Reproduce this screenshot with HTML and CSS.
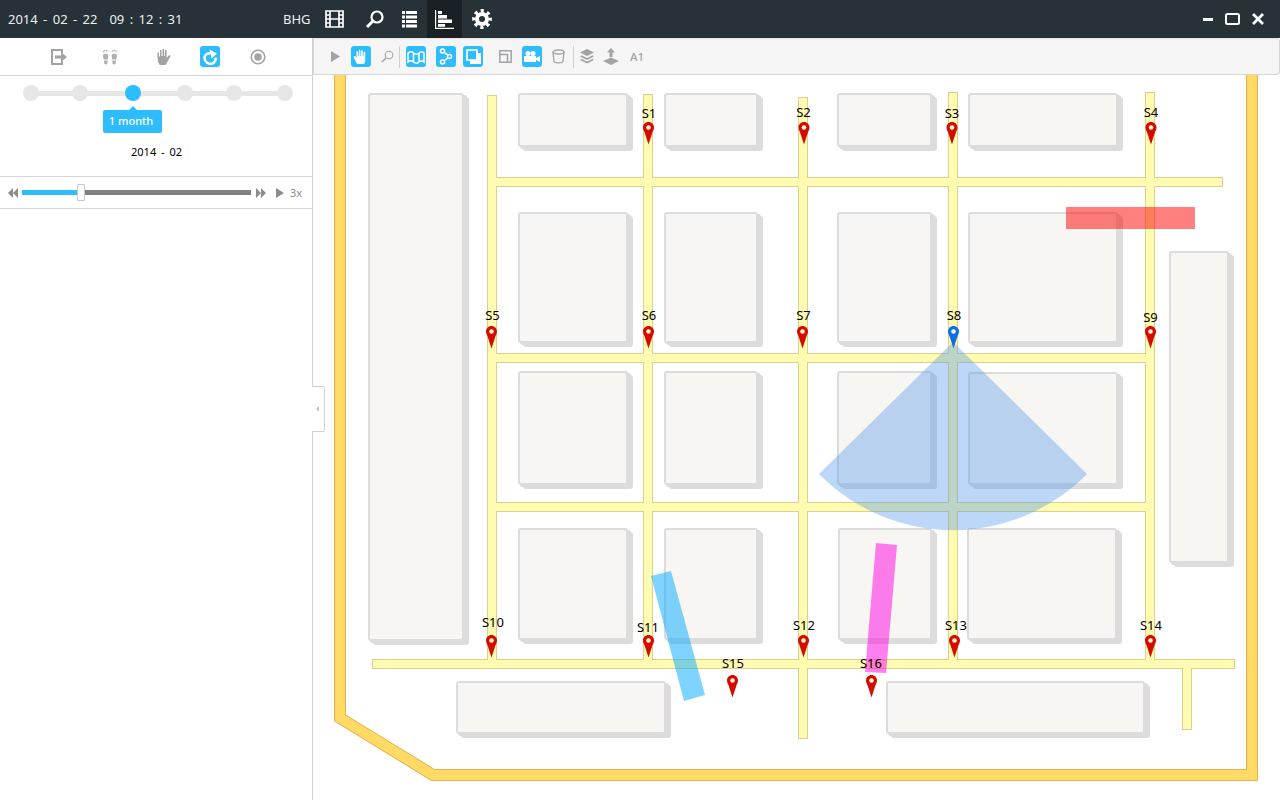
FILE: index.html
```html
<!DOCTYPE html>
<html>
<head>
<meta charset="utf-8">
<title>BHG</title>
<link rel="stylesheet" href="styles.css">
</head>
<body>

<!-- top bar -->
<header class="topbar">
  <div class="clock"><span>2014 - 02 - 22</span><span class="clock-time">09 : 12 : 31</span></div>
  <div class="site">BHG</div>
  <nav class="nav">
    <a class="nav-item nav-film">
      <svg width="19" height="18" viewBox="0 0 19 18"><path class="w-line" stroke-width="1.700" d="M1 1H18V17H1ZM5 1V17M14 1V17M1 5H5M1 9H5M1 13H5M14 5H18M14 9H18M14 13H18M5 9H14"/></svg>
    </a>
    <a class="nav-item">
      <svg width="19" height="19" viewBox="0 0 19 19"><circle class="w-line" cx="12" cy="7" r="5.500" stroke-width="2.200"/><path class="w-line" stroke-width="3" d="M8 11L2 17"/></svg>
    </a>
    <a class="nav-item">
      <svg width="15" height="17" viewBox="0 0 15 17"><path class="w-fill" d="M0 0H3V3H0ZM4 0H15V3H4ZM0 4.500H3V7.500H0ZM4 4.500H15V7.500H4ZM0 9H3V12H0ZM4 9H15V12H4ZM0 13.500H3V16.500H0ZM4 13.500H15V16.500H4Z"/></svg>
    </a>
    <a class="nav-item nav-active">
      <svg width="19" height="19" viewBox="0 0 19 19"><path class="w-line" stroke-width="1.200" d="M.6 0V18.400H19"/><path class="w-fill" d="M3 1H7V4H3ZM3 5H12V8.500H3ZM3 9.500H17V13H3ZM3 14H10V16.800H3Z"/></svg>
    </a>
    <a class="nav-item nav-gear">
      <svg width="20" height="20" viewBox="0 0 20 20"><circle class="w-line" cx="10" cy="10" r="5" stroke-width="4"/><circle class="w-line" cx="10" cy="10" r="8.200" stroke-width="3.400" stroke-dasharray="3.200 3.240" stroke-dashoffset="1.600"/></svg>
    </a>
  </nav>
  <div class="window-btns">
    <svg width="10" height="3" viewBox="0 0 10 3"><path class="w-fill" d="M0 0H10V3H0Z"/></svg>
    <svg width="15" height="12" viewBox="0 0 15 12"><rect class="w-line" x="1" y="1" width="13" height="10" rx="1.500" stroke-width="2"/></svg>
    <svg width="12" height="12" viewBox="0 0 12 12"><path class="w-line" stroke-width="2.800" d="M1 1L11 11M11 1L1 11"/></svg>
  </div>
</header>

<div class="content">

  <!-- left panel -->
  <aside class="side">
    <div class="side-tools">
      <a class="side-tool">
        <svg width="20" height="20" viewBox="0 0 20 20"><path class="g-line" stroke-width="2" d="M13 6V3H3V17H13V14"/><path class="g-fill" d="M6 8.500H12V5L18 10L12 15V11.500H6Z"/></svg>
      </a>
      <a class="side-tool">
        <svg class="soft" width="20" height="20" viewBox="0 0 20 20"><path class="g-fill" d="M3.200 7.500C3.800 6.400 7.400 6.400 8 7.500C8.600 9.500 7.800 11 7.800 12.500H3.800C3.600 11 2.600 9.500 3.200 7.500ZM4 13.500H7.700C7.800 16.500 7.200 17.500 5.900 17.500C4.600 17.500 3.900 16.500 4 13.500ZM12 7.500C12.600 6.400 16.200 6.400 16.800 7.500C17.400 9.500 16.400 11 16.200 12.500H12.200C12.200 11 11.400 9.500 12 7.500ZM12.300 13.500H16C16.100 16.500 15.400 17.500 14.100 17.500C12.800 17.500 12.200 16.500 12.300 13.500Z"/><path class="g-line" stroke-width="1.500" stroke-dasharray="1.200 .6" d="M3 5.200C4 3 7 3 8 4.500M12 4.500C13 3 16 3 17 5.200"/></svg>
      </a>
      <a class="side-tool">
        <svg width="20" height="20" viewBox="0 0 20 20"><path class="g-fill" d="M5 17C4 15 3.500 12 3.500 9V6C3.500 5 5 5 5 6V9.500H6V3.500C6 2.500 7.500 2.500 7.500 3.500V9H8.500V2.500C8.500 1.500 10.200 1.500 10.200 2.500V9H11V3.500C11 2.500 12.600 2.500 12.600 3.500V11L14.800 8.500C15.800 7.800 17 8.600 16.200 9.800L13 15.500C12.500 16.800 11.800 18 11 18H6.500C5.800 18 5.400 17.800 5 17Z"/></svg>
      </a>
      <a class="side-tool tool-on">
        <svg width="20" height="20" viewBox="0 0 20 20"><path class="w-line" stroke-width="2.400" d="M12.500 16.800C8 17.500 4.500 14.500 4.500 11C4.500 8 7 6 10.500 6.200"/><path class="w-fill" d="M9.500 2.500L17 6.500L11.500 11.500Z"/><path class="w-line" stroke-width="2.400" d="M15.800 10.500C16 13 15 15 12.500 16.800"/></svg>
      </a>
      <a class="side-tool">
        <svg width="20" height="20" viewBox="0 0 20 20"><circle class="g-line" stroke-width="1.600" cx="10" cy="10" r="6.800"/><circle class="g-fill" cx="10" cy="10" r="3.800"/></svg>
      </a>
    </div>

    <div class="side-range">
      <div class="steps">
        <span class="step"></span>
        <span class="step"></span>
        <span class="step step-on"></span>
        <span class="step"></span>
        <span class="step"></span>
        <span class="step"></span>
      </div>
      <div class="step-tip">1 month</div>
      <div class="range-date">2014 - 02</div>
    </div>

    <div class="side-play">
      <svg width="10" height="10" viewBox="0 0 10 10"><path class="g2-fill" d="M5 0V10L0 5ZM10 0V10L5 5Z"/></svg>
      <div class="play-bar">
        <div class="play-done"></div>
        <div class="play-thumb"></div>
      </div>
      <svg width="10" height="10" viewBox="0 0 10 10"><path class="g2-fill" d="M0 0V10L5 5ZM5 0V10L10 5Z"/></svg>
      <svg class="play-go" width="8" height="10" viewBox="0 0 8 10"><path class="g2-fill" d="M0 0V10L8 5Z"/></svg>
      <span class="play-speed">3x</span>
    </div>
  </aside>

  <!-- map -->
  <main class="map">
    <div class="side-grip"><span></span></div>

    <div class="toolbar">
      <div class="tb-grip"></div>
      <a class="tb-item"><svg width="9" height="11" viewBox="0 0 9 11"><path class="g-fill" d="M0 0L9 5.500L0 11Z"/></svg></a>
      <a class="tb-item tool-on">
        <svg width="16" height="16" viewBox="0 0 16 16"><path class="w-fill" d="M4 15C3 13 2 11 .8 8.500C.3 7.300 1.600 6.500 2.500 7.500L3.500 8.800V3C3.500 2 5 2 5 3V7H5.800V1.500C5.800 .6 7.400 .6 7.400 1.500V7H8.200V2C8.200 1 9.800 1 9.800 2V7.500H10.600V3.500C10.600 2.600 12.200 2.600 12.200 3.500V11C12.200 13 11.500 14 11 15Z"/></svg>
      </a>
      <a class="tb-item"><svg width="13" height="13" viewBox="0 0 13 13"><circle class="g-line" stroke-width="1.100" cx="8" cy="5" r="3.800"/><path class="g-line" stroke-width="1.600" d="M5 8L1 12"/></svg></a>
      <span class="tb-sep"></span>
      <a class="tb-item tool-on">
        <svg width="18" height="14" viewBox="0 0 18 14"><path class="w-line" stroke-width="1.500" d="M1 3C3 1.500 5 1.500 6.500 3C8.500 4.500 10.500 4.500 12 3C13.500 1.500 15.500 1.500 17 3V12C15.500 10.500 13.500 10.500 12 12C10.500 13.500 8.500 13.500 6.500 12C5 10.500 3 10.500 1 12ZM6.500 3V12M12 3V12"/></svg>
      </a>
      <a class="tb-item tool-on">
        <svg width="14" height="17" viewBox="0 0 14 17"><circle class="w-line" stroke-width="1.500" cx="3.500" cy="3" r="2"/><circle class="w-line" stroke-width="1.500" cx="10.500" cy="8.500" r="2"/><circle class="w-line" stroke-width="1.500" cx="3.500" cy="14" r="2"/><path class="w-line" stroke-width="1.500" d="M5 4.200L8.800 7.200M8.800 9.800L5 12.800"/></svg>
      </a>
      <a class="tb-item tool-on">
        <svg width="15" height="15" viewBox="0 0 15 15"><path class="w-fill" d="M4 4H15V15H4Z"/><rect class="w-line tb-front" stroke-width="1.600" x="1" y="1" width="10" height="10"/></svg>
      </a>
      <a class="tb-item"><svg width="13" height="13" viewBox="0 0 13 13"><path class="g-line" stroke-width="1.500" d="M.8.800H12.200V12.200H.8ZM.8 4.500H8.500V12.200"/></svg></a>
      <a class="tb-item tool-on">
        <svg width="16" height="12" viewBox="0 0 16 12"><circle class="w-fill" cx="4" cy="2.500" r="2.500"/><circle class="w-fill" cx="9" cy="2.500" r="2.500"/><path class="w-fill" d="M0 5H12V7L16 5V11L12 9V11H0Z"/></svg>
      </a>
      <a class="tb-item"><svg width="13" height="15" viewBox="0 0 13 15"><ellipse class="g-line" stroke-width="1.300" cx="6.500" cy="3" rx="5.500" ry="2"/><path class="g-line" stroke-width="1.300" d="M1 3L2 12.500C3 14.300 10 14.300 11 12.500L12 3"/></svg></a>
      <span class="tb-sep"></span>
      <a class="tb-item"><svg width="14" height="15" viewBox="0 0 14 15"><path class="g-fill" d="M7 0L14 3.500L7 7L0 3.500Z"/><path class="g-line" stroke-width="1.700" d="M.8 7L7 10L13.200 7M.8 10.500L7 13.500L13.200 10.500"/></svg></a>
      <a class="tb-item"><svg width="16" height="17" viewBox="0 0 16 17"><path class="g-fill" d="M8 0L12 4.500H9.500V9H6.500V4.500H4ZM8 9.500L16 13L8 17L0 13Z"/></svg></a>
      <span class="tb-text">A1</span>
    </div>

    <svg class="plan" width="967" height="762" viewBox="313 38 967 762">
      <defs>
        <g id="pin">
          <path d="M5.500 0C2.400 0 0 2.400 0 5.500C0 7.500 1 9 1.600 10.500L5.500 22.500L9.400 10.500C10 9 11 7.500 11 5.500C11 2.400 8.600 0 5.500 0Z"/>
          <circle class="pin-dot" cx="5.500" cy="5.500" r="2.300"/>
        </g>
        <path id="road-lines" d="M492 100V664M648 99V664M803 102V734M953 97V664M1150 97V664M497 182H1218M497 358H1150M497 507H1150M377 664H1230M1187 664V725"/>
      </defs>

      <!-- outer wall -->
      <path class="wall-edge" d="M340 70V718L433 775H1252V70"/>
      <path class="wall" d="M340 70V718L433 775H1252V70"/>

      <!-- roads -->
      <use class="road-edge" href="#road-lines"/>
      <use class="road" href="#road-lines"/>

      <!-- buildings -->
      <g class="blocks">
        <rect x="369" y="94" width="94" height="546"/>
        <rect x="519" y="94" width="108" height="52"/>
        <rect x="665" y="94" width="92" height="52"/>
        <rect x="838" y="94" width="93" height="52"/>
        <rect x="969" y="94" width="148" height="52"/>
        <rect x="519" y="213" width="108" height="129"/>
        <rect x="665" y="213" width="92" height="129"/>
        <rect x="838" y="213" width="93" height="129"/>
        <rect x="969" y="213" width="148" height="129"/>
        <rect x="519" y="372" width="108" height="112"/>
        <rect x="665" y="372" width="92" height="112"/>
        <rect x="838" y="372" width="93" height="112"/>
        <rect x="969" y="373" width="148" height="111"/>
        <rect x="519" y="529" width="108" height="110"/>
        <rect x="665" y="529" width="92" height="110"/>
        <rect x="839" y="529" width="92" height="110"/>
        <rect x="968" y="529" width="148" height="110"/>
        <rect x="457" y="682" width="208" height="51"/>
        <rect x="887" y="682" width="257" height="51"/>
        <rect x="1170" y="252" width="58" height="310"/>
      </g>

      <!-- zones -->
      <rect class="zone-red" x="1066" y="207" width="129" height="22"/>
      <polygon class="zone-blue" points="651,576 671,571 705,695 684,701"/>
      <polygon class="zone-pink" points="876,543 897,545 886,673 865,672"/>
      <path class="zone-cone" d="M953 342L819 474A188 188 0 0 0 1087 474Z"/>

      <!-- sensors -->
      <g class="pins">
        <use href="#pin" x="643" y="122"/><text x="649" y="118">S1</text>
        <use href="#pin" x="798.500" y="122"/><text x="803.500" y="117">S2</text>
        <use href="#pin" x="946.500" y="122"/><text x="952" y="118">S3</text>
        <use href="#pin" x="1145.500" y="122"/><text x="1151" y="117">S4</text>
        <use href="#pin" x="486" y="326"/><text x="492.500" y="320">S5</text>
        <use href="#pin" x="643" y="326"/><text x="649" y="320">S6</text>
        <use href="#pin" x="797" y="326"/><text x="803.500" y="320">S7</text>
        <use class="pin-blue" href="#pin" x="948" y="326"/><text x="954" y="320">S8</text>
        <use href="#pin" x="1145" y="326"/><text x="1150.500" y="322">S9</text>
        <use href="#pin" x="486" y="635"/><text x="493" y="627">S10</text>
        <use href="#pin" x="643" y="635"/><text x="648" y="632">S11</text>
        <use href="#pin" x="798" y="635"/><text x="804" y="630">S12</text>
        <use href="#pin" x="949" y="635"/><text x="956" y="630">S13</text>
        <use href="#pin" x="1145" y="635"/><text x="1151" y="630">S14</text>
        <use href="#pin" x="727" y="675"/><text x="733" y="668">S15</text>
        <use href="#pin" x="866" y="675"/><text x="871" y="668">S16</text>
      </g>
    </svg>
  </main>
</div>

</body>
</html>
```

FILE: styles.css
```css
html, body {
  margin: 0;
  height: 100%;
  overflow: hidden;
}

body {
  background: #fff;
  color: #000;
  font-family: "Noto Sans", sans-serif;
  font-size: 12px;
}

svg { display: block; }

/* shared icon paints */
.w-line { fill: none; stroke: #fff; }
.w-fill { fill: #fff; }
.g-line { fill: none; stroke: #a2a2a8; }
.g-fill { fill: #a2a2a8; }
.g2-fill { fill: #8c8c8c; }
.soft { opacity: .85; }

/* top bar */
.topbar {
  display: flex;
  align-items: center;
  height: 38px;
  padding-left: 8px;
  background: #263238;
  color: #eceff1;
  font-size: 13px;
}

.clock {
  display: flex;
  width: 275px;
  word-spacing: 2px;
}

.clock-time { margin-left: 12px; }

.site { width: 34px; }

.nav {
  display: flex;
  height: 38px;
}

.nav-item {
  display: flex;
  align-items: center;
  justify-content: center;
  width: 35px;
}

.nav-film { margin-right: 5px; }

.nav-gear { box-sizing: border-box; padding-left: 4px; }

.nav-active { background: #1a2125; }

.window-btns {
  display: flex;
  align-items: center;
  gap: 12px;
  margin-left: auto;
  padding-right: 16px;
}

/* layout under the bar */
.content {
  display: flex;
  height: 762px;
}

.side {
  flex: none;
  width: 312px;
  border-right: 1px solid #cfcfcf;
}

.side-tools {
  display: grid;
  grid-template-columns: 51px 54px 46px 48px 20px;
  align-items: center;
  height: 37px;
  padding-left: 49px;
  border-bottom: 1px solid #d4d4d4;
}

.side-tool {
  display: flex;
  align-items: center;
  justify-content: center;
  width: 20px;
  height: 21px;
}

.tool-on {
  border-radius: 3px;
  background: #2dbdff;
}

.side-range {
  height: 91px;
  padding-top: 9px;
  border-bottom: 1px solid #d4d4d4;
}

.steps {
  display: grid;
  grid-template-columns: 49px 53px 52px 49px 51px 16px;
  width: 270px;
  margin-left: 23px;
  background: linear-gradient(#e6e6e6, #e6e6e6) no-repeat center / 254px 5px;
}

.step {
  width: 16px;
  height: 16px;
  border-radius: 50%;
  background: #e6e6e6;
}

.step-on { background: #2dbdff; }

.step-tip {
  position: relative;
  box-sizing: border-box;
  width: 59px;
  height: 23px;
  margin: 9px 0 0 103px;
  padding-right: 3px;
  border-radius: 2px;
  background: #2dbdff;
  color: #fff;
  font-size: 11px;
  font-weight: 500;
  line-height: 22px;
  text-align: center;
}

.step-tip::before {
  content: "";
  position: absolute;
  top: -4px;
  left: 26px;
  border-right: 4px solid transparent;
  border-bottom: 4px solid #2dbdff;
  border-left: 4px solid transparent;
}

.range-date {
  margin-top: 10px;
  padding-left: 131px;
  font-size: 11px;
  line-height: 17px;
  word-spacing: 2px;
}

.side-play {
  display: flex;
  align-items: center;
  height: 31px;
  padding-left: 8px;
  border-bottom: 1px solid #d4d4d4;
}

.play-bar {
  position: relative;
  width: 229px;
  height: 5px;
  margin: 0 5px 0 4px;
  background: #808080;
}

.play-done {
  width: 59px;
  height: 5px;
  background: #2dbdff;
}

.play-thumb {
  position: absolute;
  top: -6px;
  left: 55px;
  box-sizing: border-box;
  width: 8px;
  height: 17px;
  border: 1px solid #c8c8c8;
  border-radius: 1px;
  background: #fff;
}

.play-go { margin-left: 10px; }

.play-speed {
  margin-left: 6px;
  color: #8c8c8c;
  font-size: 11px;
}

/* map area */
.map {
  position: relative;
  flex: 1;
}

.side-grip {
  position: absolute;
  z-index: 2;
  top: 348px;
  left: -1px;
  display: flex;
  align-items: center;
  box-sizing: border-box;
  width: 13px;
  height: 46px;
  padding-left: 4px;
  border: 1px solid #cfcfcf;
  border-left: 0;
  border-radius: 0 2px 2px 0;
  background: #fff;
}

.side-grip span {
  border-top: 3px solid transparent;
  border-right: 3px solid #c4c4c4;
  border-bottom: 3px solid transparent;
}

.toolbar {
  position: absolute;
  z-index: 2;
  top: 0;
  left: 0;
  right: 0;
  display: grid;
  grid-template-columns: 11px 26px 26px 22px 7px 30px 27px 32px 27px 26px 25px 4px 24px 29px auto;
  justify-content: start;
  align-items: center;
  box-sizing: border-box;
  height: 37px;
  border: 1px solid #d6d6d6;
  border-top-color: #e4e4e4;
  border-radius: 0 4px 4px 0;
  background: #f5f5f5;
}

.tb-grip {
  width: 8px;
  height: 26px;
  margin-left: 2px;
  background: radial-gradient(#dcdcdc 40%, transparent 45%) 0 0 / 2px 2px;
}

.tb-item {
  display: flex;
  align-items: center;
  justify-content: center;
  width: 20px;
  height: 21px;
}

.tb-front { fill: #2dbdff; }

.tb-sep {
  width: 1px;
  height: 22px;
  background: #cfcfcf;
}

.tb-text {
  color: #a2a2a8;
  font-size: 11.500px;
  font-weight: 500;
}

.plan { position: absolute; top: 0; left: 0; }

.wall-edge { fill: none; stroke: #e8b04e; stroke-width: 12; }
.wall { fill: none; stroke: #ffdb66; stroke-width: 10; }

.road-edge { fill: none; stroke: #ddd08f; stroke-width: 10; stroke-linecap: square; }
.road { fill: none; stroke: #fffbb0; stroke-width: 8; stroke-linecap: square; }

.blocks {
  fill: #f7f6f3;
  stroke: #dcdcdc;
  stroke-width: 2;
  filter: drop-shadow(3px 2px 0 #dcdcdc) drop-shadow(2px 2px 0 #dcdcdc);
}

.blocks rect { rx: 2px; }

.zone-red { fill: rgba(255, 0, 0, .5); }
.zone-blue { fill: rgba(0, 170, 255, .5); }
.zone-pink { fill: rgba(255, 0, 225, .5); }
.zone-cone { fill: rgba(80, 150, 235, .38); }

.pins { color: #d40c00; fill: currentColor; }
.pins text { fill: #000; font-size: 13px; text-anchor: middle; }
.pin-dot { fill: #fff3d6; }
.pin-blue { fill: #0d6fe8; }
```
